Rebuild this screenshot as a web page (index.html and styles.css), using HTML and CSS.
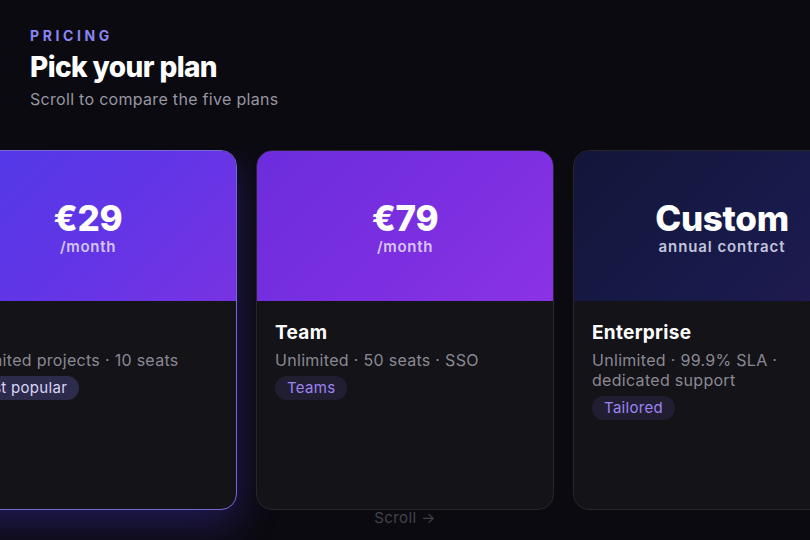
FILE: index.html
```html
<!doctype html>
<html lang="en">
<head>
    <meta charset="UTF-8">
    <title>Pricing</title>
    <link rel="stylesheet" href="styles.css">
</head>
<body>
    <div class="page">
        <div class="intro">
            <div class="eyebrow">PRICING</div>
            <h1 class="title">Pick your plan</h1>
            <p class="lead">Scroll to compare the five plans</p>
        </div>

        <div class="track" id="track">
            <div class="plan">
                <div class="plan-head head-free">
                    <div class="price">€0</div>
                    <div class="per">forever</div>
                </div>
                <div class="plan-body">
                    <div class="plan-name">Free</div>
                    <div class="plan-desc">1 project · 1 seat</div>
                    <span class="tag">Starter</span>
                </div>
            </div>
            <div class="plan">
                <div class="plan-head head-basic">
                    <div class="price">€9</div>
                    <div class="per">/month</div>
                </div>
                <div class="plan-body">
                    <div class="plan-name">Basic</div>
                    <div class="plan-desc">5 projects · 3 seats</div>
                    <span class="tag">Solo</span>
                </div>
            </div>
            <div class="plan plan-featured">
                <div class="plan-head head-pro">
                    <div class="price">€29</div>
                    <div class="per">/month</div>
                </div>
                <div class="plan-body">
                    <div class="plan-name">Pro</div>
                    <div class="plan-desc">Unlimited projects · 10 seats</div>
                    <span class="tag">Most popular</span>
                </div>
            </div>
            <div class="plan" id="centered">
                <div class="plan-head head-team">
                    <div class="price">€79</div>
                    <div class="per">/month</div>
                </div>
                <div class="plan-body">
                    <div class="plan-name">Team</div>
                    <div class="plan-desc">Unlimited · 50 seats · SSO</div>
                    <span class="tag">Teams</span>
                </div>
            </div>
            <div class="plan">
                <div class="plan-head head-ent">
                    <div class="price">Custom</div>
                    <div class="per">annual contract</div>
                </div>
                <div class="plan-body">
                    <div class="plan-name">Enterprise</div>
                    <div class="plan-desc">Unlimited · 99.9% SLA · dedicated support</div>
                    <span class="tag">Tailored</span>
                </div>
            </div>
        </div>

        <div class="hint">Scroll →</div>
    </div>

    <script type="text/javascript">
    var track = document.getElementById('track'),
        card = document.getElementById('centered');
    track.scrollLeft = card.offsetLeft + card.offsetWidth / 2 - track.clientWidth / 2;
    </script>
</body>
</html>
```

FILE: styles.css
```css
html,body{margin:0;padding:0;}
body{background:#0b0a10;color:#fff;font-family:Inter,"Noto Sans",sans-serif;}
.page{height:540px;overflow:hidden;}

.intro{padding:28px 30px 0;}
.eyebrow{font-size:14px;line-height:16px;font-weight:700;letter-spacing:3.6px;color:#8a85f2;}
.title{margin:7px 0 0;font-size:28px;line-height:32px;font-weight:800;letter-spacing:-0.6px;}
.lead{margin:6px 0 0;font-size:16px;line-height:20px;letter-spacing:0.3px;color:#9796a3;}

.track{display:flex;gap:19px;margin-top:41px;padding:0 0 30px;overflow-x:auto;scrollbar-width:none;}
.track::-webkit-scrollbar{display:none;}

.plan{flex:0 0 298px;height:360px;box-sizing:border-box;border:1px solid #27262d;border-radius:16px;background:#141318;overflow:hidden;display:flex;flex-direction:column;}
.plan-featured{border:1.5px solid #7468d8;box-shadow:0 14px 40px rgba(76,56,220,0.35);}

.plan-head{height:150px;flex:0 0 auto;display:flex;flex-direction:column;align-items:center;justify-content:center;padding-top:4px;box-sizing:border-box;}
.head-free{background:linear-gradient(135deg,#1e2a44,#243150);}
.head-basic{background:linear-gradient(135deg,#2c3fc8,#4537df);}
.head-pro{background:linear-gradient(135deg,#4f3ae8 0%,#6235e6 55%,#7833e2 100%);}
.head-team{background:linear-gradient(135deg,#6c2ddd 0%,#7b2fe0 55%,#8b32e6 100%);}
.head-ent{background:linear-gradient(135deg,#131639 0%,#181a4a 60%,#221a52 100%);}

.price{font-size:35px;line-height:36px;font-weight:800;letter-spacing:-0.3px;}
.per{margin-top:2px;font-size:15px;line-height:18px;font-weight:600;letter-spacing:0.7px;color:rgba(255,255,255,0.72);}
.head-ent .per{color:#c3c3dc;letter-spacing:0.9px;}

.plan-body{padding:21px 18px 20px;}
.plan-name{font-size:19px;line-height:22px;font-weight:700;letter-spacing:0.3px;}
.plan-desc{margin-top:6px;font-size:16px;line-height:20px;letter-spacing:0.3px;color:#8a8993;}
.tag{display:inline-block;margin-top:6px;padding:0 12px;height:24px;line-height:24px;border-radius:12px;font-size:15px;letter-spacing:0.3px;background:#211e32;color:#9d84f2;}
.plan-featured .tag{background:#2d2b4c;color:#d9d6f7;}

.hint{margin-top:-31px;text-align:center;font-size:15px;line-height:18px;letter-spacing:0.4px;color:#44434d;}
```
